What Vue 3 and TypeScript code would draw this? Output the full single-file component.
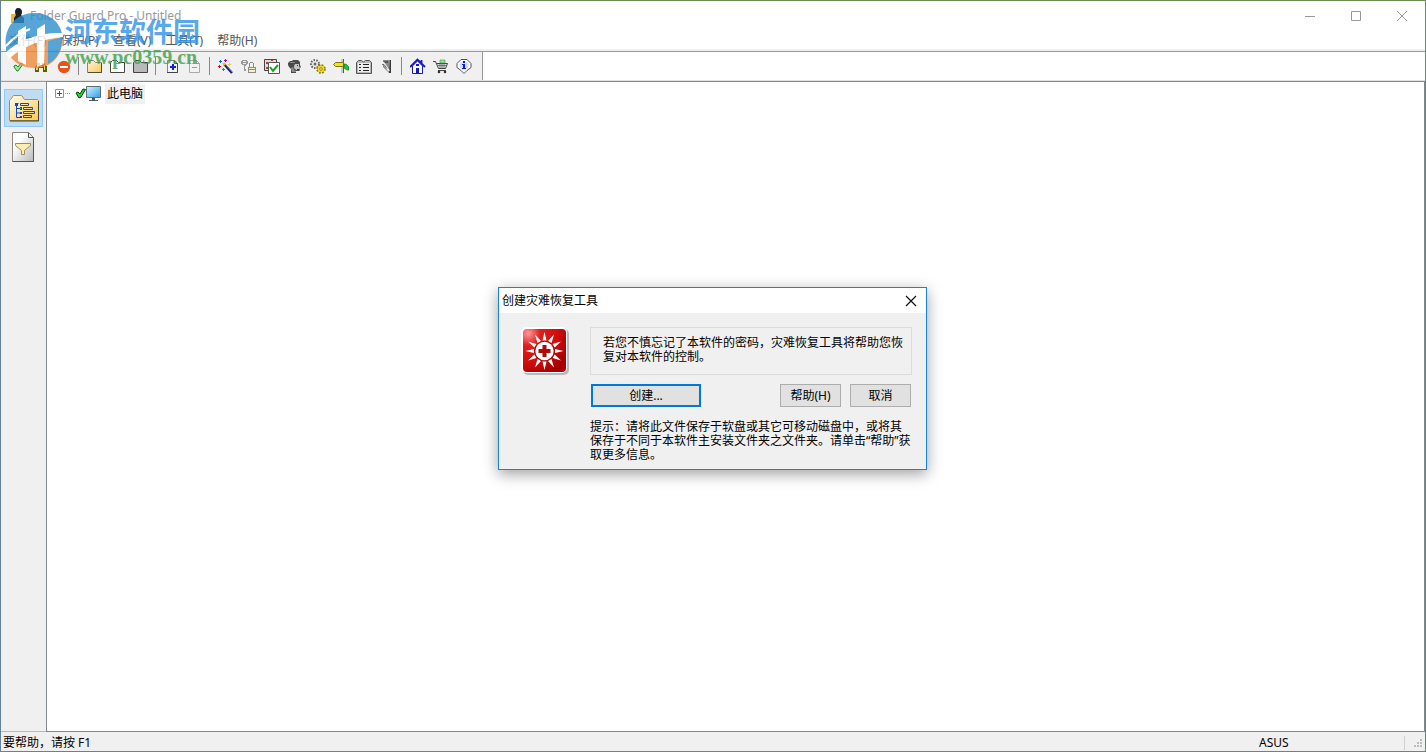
<script setup lang="ts">
import { ref } from 'vue'

const menus: string[] = ['文件(F)', '保护(P)', '查看(V)', '工具(T)', '帮助(H)']
const dialogOpen = ref(true)
</script>

<template>
  <div class="window">
    <header class="titlebar">
      <svg class="app-icon" width="16" height="18" viewBox="0 0 16 18">
        <path d="M1 7h7v9H1z" fill="#e8b73c" />
        <path d="M8 1c3 0 4 2 4 4s-1 3-1 3l3 3v5H4v-5l2-3s-1-1-1-3 1-4 3-4z" fill="#1c2024" />
      </svg>
      <h1>Folder Guard Pro - Untitled</h1>
      <div class="caption-buttons">
        <button type="button" aria-label="最小化">
          <svg width="10" height="10" viewBox="0 0 10 10" shape-rendering="crispEdges"><path d="M0 5h10v1H0z" fill="#999" /></svg>
        </button>
        <button type="button" aria-label="最大化">
          <svg width="10" height="10" viewBox="0 0 10 10"><path d="M.5.5h9v9h-9z" fill="none" stroke="#999" /></svg>
        </button>
        <button type="button" aria-label="关闭">
          <svg width="10" height="10" viewBox="0 0 10 10"><path d="M0 0l10 10M10 0L0 10" stroke="#999" /></svg>
        </button>
      </div>
    </header>

    <nav class="menubar">
      <button v-for="m in menus" :key="m" type="button">{{ m }}</button>
    </nav>

    <div class="toolbar-row">
      <div class="toolbar" role="toolbar">
        <button type="button" aria-label="启用">
          <svg viewBox="0 0 16 16"><path d="M4 8l2-1 2 2 3-4 2 1-5 7-1 0-3-4z" fill="#8df58d" stroke="#2c7c3c" /></svg>
        </button>
        <button type="button" aria-label="查找">
          <svg viewBox="0 0 16 16" shape-rendering="crispEdges"><path d="M4 5h3v2h2V5h3v2h1v1h1v6h-4v-4H6v4H2V8h1V7h1z" fill="#5c5a10" /><path d="M4 7h1v5H3V9h1zM11 7h1v5h-1zM7 8h2v1H7z" fill="#e6de35" /></svg>
        </button>
        <button type="button" aria-label="禁止">
          <svg viewBox="0 0 16 16"><circle cx="8" cy="9" r="6.2" fill="#e5531f" /><path d="M4 8h8v2H4z" fill="#fff" /></svg>
        </button>
        <span class="sep"></span>
        <button type="button" aria-label="打开">
          <svg viewBox="0 0 16 16"><defs><linearGradient id="fy" x2="1" y2="1"><stop stop-color="#fff6dc" /><stop offset="1" stop-color="#f3c95f" /></linearGradient></defs><path d="M.5 14.500V4.500L2.500 2.500H6.500L8.500 4.500H14.500V14.500z" fill="url(#fy)" stroke="#8f8468" /><path d="M1 14.500H14.500V5" fill="none" stroke="#554b35" /></svg>
        </button>
        <button type="button" aria-label="无属性">
          <svg viewBox="0 0 16 16"><path d="M.5 14.500V4.500L2.500 2.500H6.500L8.500 4.500H14.500V14.500z" fill="#fff" stroke="#444" /></svg>
        </button>
        <button type="button" aria-label="隐藏">
          <svg viewBox="0 0 16 16"><path d="M.5 14.500V4.500L2.500 2.500H6.500L8.500 4.500H14.500V14.500z" fill="#b9b9b9" stroke="#444" /></svg>
        </button>
        <span class="sep"></span>
        <button type="button" aria-label="添加">
          <svg viewBox="0 0 16 16"><path d="M3.500 2.500H10.500L13.500 5.500V14.500H3.500z" fill="#f4f4f4" stroke="#858585" /><path d="M3 14.500H13.500V5.500H10.500V2.500" fill="none" stroke="#444" /><path d="M8 6h2v2h2v2h-2v2H8v-2H6V8h2z" fill="#0a22e8" /></svg>
        </button>
        <button type="button" aria-label="移除">
          <svg viewBox="0 0 16 16"><path d="M2.500 2.500H9.500L12.500 5.500V14.500H2.500z" fill="#f2f2f2" stroke="#aaa" /><path d="M9.500 2.500V5.500H12.500M5 9.500h5" fill="none" stroke="#999" /></svg>
        </button>
        <span class="sep"></span>
        <button type="button" aria-label="向导">
          <svg viewBox="0 0 16 16"><path d="M6 6l8 9" stroke="#17176e" stroke-width="2.400" /><path d="M5 5l2 2" stroke="#e8d100" stroke-width="2" /><path d="M7 6l7 8" stroke="#8b8bd0" stroke-width=".7" /><path d="M2 2h1v1h1v1H3v1H2V4H1V3h1z" fill="#16c" /><path d="M7 1h1v1h1v1H8v1H7V3H6V2h1z" fill="#a0a" /><path d="M1 7h1v1h1v1H2v1H1V9H0V8h1z" fill="#c11" /><path d="M5 10h1v1h1v1H6v1H5v-1H4v-1h1z" fill="#1a2" /><path d="M11 5h1v1h1v1h-1v1h-1V7h-1V6h1z" fill="#e8c452" /></svg>
        </button>
        <button type="button" aria-label="密码">
          <svg viewBox="0 0 16 16" shape-rendering="crispEdges"><path d="M1 2h5v1h1v3H6v1H5v6H3V7H1V6H0V3h1z" fill="#999" /><path d="M2 3h3v1H2zM2 5h3v1H2zM4 8h1v3H4z" fill="#eee" /><path d="M9 4h3v1h1v4h-1V5H9v4H8V5h1zM7 9h8v6H7z" fill="#8c8c80" /><path d="M8 10h6v1H8zM8 12h6v2H8z" fill="#f4f1cb" /></svg>
        </button>
        <button type="button" aria-label="受信任的程序">
          <svg viewBox="0 0 16 16"><path d="M.5 1.500h12v11H.500z" fill="#ddd" stroke="#444" /><path d="M2 4h2v2H2zM2 9h2v2H2zM7 2h2v1H7z" fill="#c33" /><path d="M4.500 4.500h11v11h-11z" fill="#fff" stroke="#555" /><path d="M6 9l3 4 5-6" fill="none" stroke="#18a31d" stroke-width="2" /></svg>
        </button>
        <button type="button" aria-label="用户">
          <svg viewBox="0 0 16 16"><path d="M3 3h2l1-1h5l2 2v3l1 2-1 1v2l-1 1H9v2H4v-4L2 9 1 7V5z" fill="#4a4a4a" /><path d="M8 6h4v2l1 2-1 2H9L7 10V8z" fill="#c4c4c4" /><path d="M4 10l2-1 1 3 2 1v1H5z" fill="#8d8d8d" /><path d="M10 7h1v1h-1zM10 11h2v1h-2z" fill="#333" /><path d="M3 4h5v1H3z" fill="#8a8a8a" /></svg>
        </button>
        <button type="button" aria-label="选项">
          <svg viewBox="0 0 16 16"><circle cx="5" cy="6" r="4" fill="#eee" stroke="#666" stroke-width="2" stroke-dasharray="1.600 1.200" /><circle cx="5" cy="6" r="1.500" fill="#666" /><circle cx="11" cy="11" r="3.800" fill="#f4d600" stroke="#8c7d0b" stroke-width="2" stroke-dasharray="1.800 1.200" /><circle cx="11" cy="11" r="3.200" fill="#f2da10" /><circle cx="11" cy="11" r="1.300" fill="#fff" stroke="#665a0b" stroke-width=".7" /></svg>
        </button>
        <button type="button" aria-label="切换">
          <svg viewBox="0 0 16 16"><path d="M8 1h3v14H8z" fill="#ccc" /><path d="M10 1h1v14h-1z" fill="#555" /><path d="M.5 6.500l2-2h8v4h-8z" fill="#f4df1b" stroke="#81760e" /><path d="M11 6h2l3 3v3h-2l-3-2z" fill="#17c52a" stroke="#176c22" stroke-width=".6" /></svg>
        </button>
        <button type="button" aria-label="日志">
          <svg viewBox="0 0 16 16"><path d="M.5 4.500L2.500 2.500H5.500L7.500 4 9.500 2.500H13.500L15.500 4.500V15.500H.500z" fill="#b8b8b8" stroke="#555" /><path d="M2 5h12v9H2z" fill="#eee" /><path d="M3 6h2v1H3zM3 9h2v1H3zM3 12h2v1H3zM7 6h6v1H7zM7 9h6v1H7zM7 12h6v1H7z" fill="#222" /></svg>
        </button>
        <button type="button" aria-label="锁定">
          <svg viewBox="0 0 16 16"><path d="M4 2h8v13h-2L4 9z" fill="#888" /><path d="M11 2h1v13h-2z" fill="#3a3a3a" /><path d="M4 3h5v2H4z" fill="#555" /><path d="M4 4l6 9" stroke="#eee" stroke-width="2" /><path d="M3 6.500h2l3 4" fill="none" stroke="#555" stroke-width=".8" /></svg>
        </button>
        <span class="sep"></span>
        <button type="button" aria-label="主页">
          <svg viewBox="0 0 16 16"><path d="M2.500 8v7.500h10V8l-5-5z" fill="#fff" stroke="#1717c8" /><path d="M0 9l7.500-7.500L15 9M11.500 2v4" fill="none" stroke="#1717c8" stroke-width="1.800" /><path d="M6 10h3v5H6z" fill="#1717c8" /><path d="M6 6h3v2H6z" fill="#1717c8" /></svg>
        </button>
        <button type="button" aria-label="购买">
          <svg viewBox="0 0 16 16"><path d="M0 3.500h2.500l3 7h7l2-5H3.500" fill="#ddd" stroke="#444" /><path d="M5 7.500h9M7 6v4M9 6v4M11 6v4" stroke="#555" stroke-width=".7" /><path d="M7 2h5v3H7z" fill="#8fe7a2" stroke="#4a8a59" stroke-width=".6" /><path d="M5 12.500h8" stroke="#444" /><circle cx="6" cy="14" r="1.300" fill="#333" /><circle cx="12" cy="14" r="1.300" fill="#333" /></svg>
        </button>
        <button type="button" aria-label="关于">
          <svg viewBox="0 0 16 16"><path d="M5 1.500h6l4 4v4l-4 3-3 3-3-3-4-3v-4z" fill="#fff" stroke="#555" /><circle cx="8" cy="7.500" r="4.500" fill="#d6ddff" /><path d="M7 3h2v2H7zM6 6h3v4h1v1H6v-1h1V7H6z" fill="#0d1be0" /></svg>
        </button>
      </div>
    </div>

    <div class="workspace">
      <aside class="sidebar">
        <button type="button" class="view active" aria-label="文件夹视图">
          <svg width="30" height="27" viewBox="0 0 30 27">
            <defs><linearGradient id="big" x2="1" y2="1"><stop stop-color="#fffaf0" /><stop offset=".4" stop-color="#ffe9b0" /><stop offset="1" stop-color="#f9ca4f" /></linearGradient></defs>
            <path d="M.5 25.500V5.500L1.500 4.500 4.500.5H12.500L15.500 4.500H28.500L29.500 5.500V25.500z" fill="url(#big)" stroke="#a88e50" />
            <path d="M1 26h28.500V6" fill="none" stroke="#4a412c" />
            <g fill="none" stroke="#1445c8"><path d="M7.500 9v13.500H11M7.500 13.500H11M7.500 18H11M6.500 8.500h3M11.500 8.500h8v2h-8zM14.500 12.500h9v2h-9zM14.500 16.500h11v2h-11zM14.500 20.500h8v2h-8z" /></g>
            <path d="M6 8h3v3H6zM11 12h2v3h-2zM11 17h2v2h-2zM11 21h2v2h-2z" fill="#1445c8" />
            <path d="M11 13h1v1h-1z" fill="#36c04c" />
          </svg>
        </button>
        <button type="button" class="view" aria-label="筛选器视图">
          <svg width="22" height="30" viewBox="0 0 22 30">
            <defs><linearGradient id="pg" x2="1" y2="1"><stop offset=".3" stop-color="#fff" /><stop offset="1" stop-color="#b9b9b9" /></linearGradient></defs>
            <path d="M.5.5H16.500L21.500 5.500V29.500H.500z" fill="url(#pg)" stroke="#888" />
            <path d="M16.500.5V5.500H21.500V29.500H.500" fill="none" stroke="#555" />
            <path d="M3.500 11.500H18.500V13.500L12.500 18.500V22.500H9.500V18.500L3.500 13.500z" fill="#ffeeb0" stroke="#9b8c61" />
          </svg>
        </button>
      </aside>

      <main class="tree">
        <div class="node">
          <svg width="16" height="16" viewBox="0 0 16 16"><path d="M.5 3.500h8v8h-8z" fill="#fff" stroke="#929292" /><path d="M2 7.500h5M4.500 5v5" stroke="#2f4ba0" /><path d="M10 7.500h6" stroke="#999" stroke-dasharray="1 1" /></svg>
          <svg class="tick" width="11" height="16" viewBox="0 0 11 16"><path d="M1 7l2-1 2 2 3-5 2.500.5L6 11l-2 1z" fill="#14e31a" stroke="#0a3d0d" /></svg>
          <svg width="15" height="16" viewBox="0 0 15 16"><defs><linearGradient id="scr" x2="1" y2="1"><stop stop-color="#d8f2ff" /><stop offset="1" stop-color="#2a9fe8" /></linearGradient></defs><path d="M.5.5h14v11H.500z" fill="url(#scr)" stroke="#5d6d7a" /><path d="M6 12h3v2h3v1H3v-1h3z" fill="#4b5862" /></svg>
          <span class="label">此电脑</span>
        </div>
      </main>
    </div>

    <footer class="status">
      <span class="hint">要帮助，请按 F1</span>
      <span class="user">ASUS</span>
      <svg class="grip" width="20" height="16" viewBox="0 0 20 16"><path d="M15 4h2v2h-2zM12 7h2v2h-2zM15 7h2v2h-2zM9 10h2v2H9zM12 10h2v2h-2zM15 10h2v2h-2z" fill="#bcbcbc" /></svg>
    </footer>

    <div class="watermark">
      <svg width="60" height="58" viewBox="0 0 60 58">
        <path d="M1 35C-2 16 11 1 29 1c15 0 26 9 28 21C41 23 20 27 1 41z" fill="#2c8fcc" />
        <path d="M5 44C22 31 40 26 57 25c2 17-10 31-27 31-11 0-20-4-25-12z" fill="#f08a3c" />
        <path d="M13 19l8-5v39l-8-4zM32 17l8-5v12l-1 28-7 3z" fill="#fff" />
        <path d="M0 41C15 27 35 20 58 21v4C38 27 19 33 4 47z" fill="#fff" />
        <path d="M43 29l14-4c1 11-4 21-14 27z" fill="#2c8fcc" />
        <path d="M1 34c8-9 16-14 24-17" fill="none" stroke="#fff" stroke-width="2" />
      </svg>
      <div class="brand">
        <strong>河东软件园</strong>
        <span>www.pc0359.cn</span>
      </div>
    </div>

    <div v-if="dialogOpen" class="overlay">
      <section class="dialog" role="dialog" aria-labelledby="dlg-title">
        <div class="dlg-title">
          <h2 id="dlg-title">创建灾难恢复工具</h2>
          <button type="button" aria-label="关闭" @click="dialogOpen = false">
            <svg width="12" height="12" viewBox="0 0 12 12"><path d="M1 1l10 10M11 1L1 11" stroke="#111" stroke-width="1.200" /></svg>
          </button>
        </div>
        <div class="dlg-body">
          <svg width="48" height="48" viewBox="0 0 48 48">
            <defs>
              <radialGradient id="red" cx=".12" cy=".1" r="1"><stop stop-color="#ff9a9a" /><stop offset=".28" stop-color="#e02020" /><stop offset=".7" stop-color="#cf0c0c" /><stop offset="1" stop-color="#a80000" /></radialGradient>
            </defs>
            <rect x="2" y="2" width="46" height="46" rx="5" fill="#b9b9b9" />
            <rect width="46" height="46" rx="5" fill="#fff" />
            <rect x="2" y="2" width="43" height="43" rx="4" fill="url(#red)" />
            <g fill="#fff">
              <g v-for="n in 12" :key="n" :transform="`rotate(${n * 30} 23.500 24)`"><path d="M21.500 13.500l2-8.500 2 8.500z" /></g>
            </g>
            <circle cx="23.500" cy="24" r="10.200" fill="#a80808" />
            <circle cx="23.500" cy="24" r="9.200" fill="#fff" />
            <path d="M21.500 18h4v4h4v4h-4v4h-4v-4h-4v-4h4z" fill="#b00808" />
          </svg>
          <div class="dlg-content">
            <p class="message">若您不慎忘记了本软件的密码，灾难恢复工具将帮助您恢<br />复对本软件的控制。</p>
            <div class="actions">
              <button type="button" class="primary">创建...</button>
              <button type="button" class="help">帮助(H)</button>
              <button type="button" @click="dialogOpen = false">取消</button>
            </div>
            <p class="tip">提示：请将此文件保存于软盘或其它可移动磁盘中，或将其<br />保存于不同于本软件主安装文件夹之文件夹。请单击“帮助”获<br />取更多信息。</p>
          </div>
        </div>
      </section>
    </div>
  </div>
</template>

<style>
body {
  margin: 0;
}
</style>

<style scoped>
* {
  box-sizing: border-box;
}
.window {
  position: relative;
  display: flex;
  flex-direction: column;
  height: 100vh;
  border: 1px solid #6b8e4e;
  border-left-color: #64839a;
  background: #fff;
  color: #000;
  font: 12px/14px "Noto Sans", "Noto Sans CJK SC", sans-serif;
  overflow: hidden;
}
button {
  margin: 0;
  padding: 0;
  border: 0;
  background: none;
  color: inherit;
  font: inherit;
}
h1,
h2,
p {
  margin: 0;
  font-size: 12px;
  font-weight: 400;
}
svg {
  display: block;
  flex: none;
}
.titlebar {
  display: flex;
  align-items: center;
  height: 30px;
  padding-left: 9px;
  color: #999;
}
.titlebar h1 {
  flex: 1;
  padding-left: 4px;
}
.caption-buttons {
  display: flex;
  height: 100%;
}
.caption-buttons button {
  display: grid;
  place-items: center;
  width: 46px;
}
.menubar {
  display: flex;
  gap: 14px;
  height: 20px;
  padding: 2px 0 0 8px;
  border-bottom: 2px solid #f0f0f0;
  color: #555;
}
.menubar button {
  white-space: nowrap;
}
.toolbar-row {
  display: flex;
  height: 30px;
  border-top: 1px solid #999;
  border-bottom: 1px solid #e0e0e0;
}
.toolbar {
  display: flex;
  align-items: center;
  padding: 0 7px 0 5px;
  border-right: 1px solid #999;
  background: #f0f0f0;
}
.toolbar button {
  padding: 0 3px 0 4px;
}
.toolbar svg {
  width: 16px;
  height: 16px;
}
.sep {
  width: 8px;
  height: 18px;
  background: linear-gradient(#888, #888) 3px 0 / 1px 100% no-repeat;
}
.workspace {
  display: flex;
  flex: 1;
  min-height: 0;
}
.sidebar {
  display: flex;
  flex-direction: column;
  align-items: flex-start;
  gap: 5px;
  width: 45px;
  padding: 7px 3px;
  border-top: 1px solid #a0a0a0;
  border-bottom: 1px solid #b8b8b8;
  background: #f0f0f0;
}
.view {
  padding: 0 8px;
}
.view.active {
  width: 39px;
  height: 38px;
  padding: 0 4px;
  border: 1px solid #91c9f7;
  background: #bfdcf3;
}
.tree {
  flex: 1;
  padding: 2px 8px;
  border: 1px solid #828790;
  background: #fff;
}
.node {
  display: flex;
  align-items: center;
}
.tick {
  margin-left: 4px;
}
.label {
  margin-left: 4px;
  padding: 3px 2px;
  background: #f0f0f0;
}
.status {
  display: flex;
  align-items: center;
  height: 19px;
  padding: 2px 0 0 2px;
  background: #f0f0f0;
}
.hint {
  flex: 1;
}
.user {
  width: 146px;
  height: 14px;
  border-right: 1px solid #d0d0d0;
}
.watermark {
  position: absolute;
  top: 11px;
  left: 4px;
  display: flex;
  opacity: 0.8;
  pointer-events: none;
}
.brand {
  display: flex;
  flex-direction: column;
  padding-top: 4px;
}
.brand strong {
  color: #2f93e8;
  font: 700 27px/30px "Noto Sans CJK SC", sans-serif;
}
.brand span {
  color: #41a048;
  font: 700 20px/22px "Liberation Serif", serif;
}
.overlay {
  position: absolute;
  inset: 0;
  display: grid;
  place-items: center;
  padding: 5px 1px 0 0;
}
.dialog {
  width: 429px;
  border: 1px solid #1883d7;
  background: #f0f0f0;
  box-shadow: 0 4px 14px rgba(0, 0, 0, 0.38);
}
.dlg-title {
  display: flex;
  align-items: center;
  justify-content: space-between;
  height: 25px;
  padding: 0 9px 0 3px;
  background: #fff;
}
.dlg-body {
  display: flex;
  gap: 21px;
  padding: 14px 14px 7px 22px;
}
.dlg-content {
  flex: 1;
  min-width: 0;
  white-space: nowrap;
}
.message {
  height: 48px;
  padding: 8px 0 0 12px;
  border: 1px solid #dcdcdc;
  line-height: 14px;
}
.actions {
  display: flex;
  gap: 9px;
  padding: 9px 1px 13px;
}
.actions button {
  width: 61px;
  height: 23px;
  border: 1px solid #adadad;
  background: #e1e1e1;
}
.actions .primary {
  width: 110px;
  border: 2px solid #0078d7;
}
.actions .help {
  margin-left: auto;
}
</style>
